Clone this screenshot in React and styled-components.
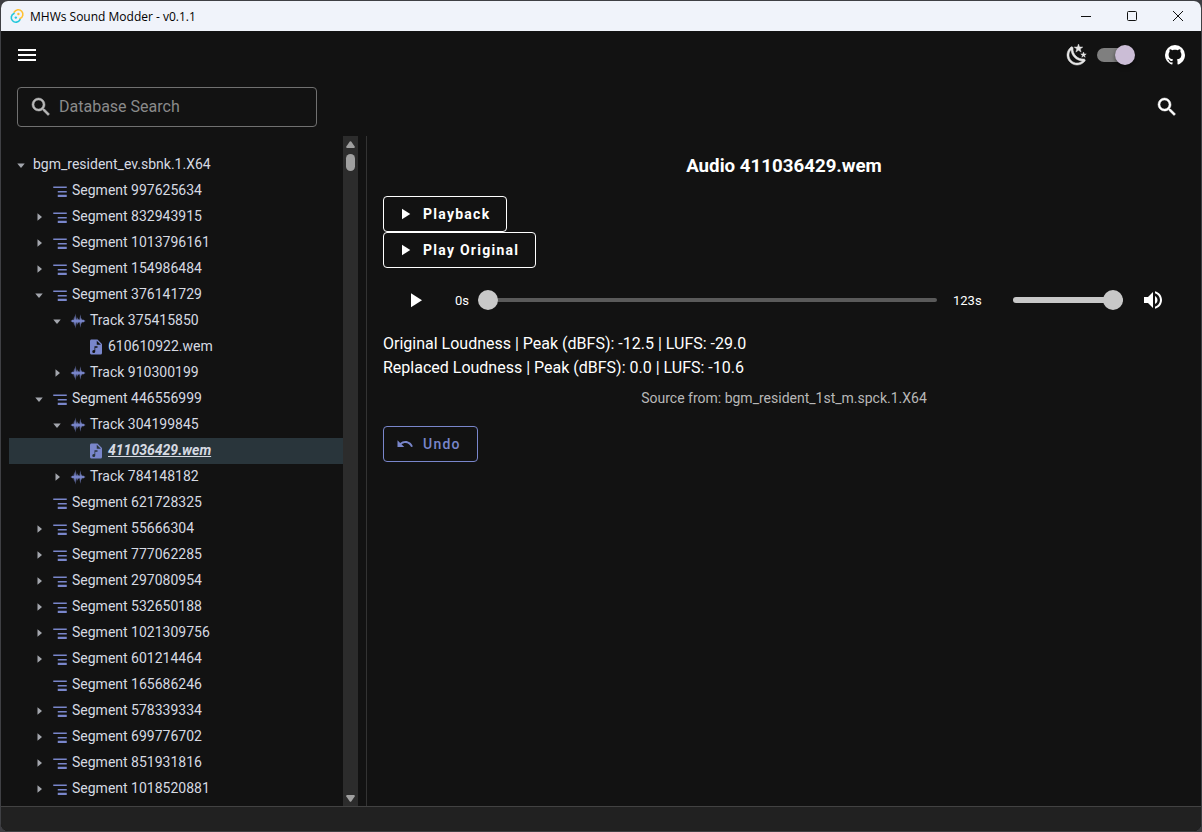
import React, { useState } from "react";
import styled, { createGlobalStyle } from "styled-components";

const GlobalStyle = createGlobalStyle`
  * { box-sizing: border-box; }
  body { margin: 0; background: #3d3d42; font-family: Roboto, "Liberation Sans", sans-serif; }
  button, input { font: inherit; color: inherit; }
`;

const paths = {
  menu: "M3,6H21V8H3V6M3,11H21V13H3V11M3,16H21V18H3V16Z",
  magnify:
    "M9.5,3A6.5,6.5 0 0,1 16,9.5C16,11.11 15.41,12.59 14.44,13.73L14.71,14H15.5L20.5,19L19,20.5L14,15.5V14.71L13.73,14.44C12.59,15.41 11.11,16 9.5,16A6.5,6.5 0 0,1 3,9.5A6.5,6.5 0 0,1 9.5,3M9.5,5C7,5 5,7 5,9.5C5,12 7,14 9.5,14C12,14 14,12 14,9.5C14,7 12,5 9.5,5Z",
  play: "M8,5.14V19.14L19,12.14L8,5.14Z",
  undo: "M12.5,8C9.85,8 7.45,9 5.6,10.6L2,7V16H11L7.38,12.38C8.77,11.22 10.54,10.5 12.5,10.5C16.04,10.5 19.05,12.81 20.1,16L22.47,15.22C21.08,11.03 17.15,8 12.5,8Z",
  volume:
    "M14,3.23V5.29C16.89,6.15 19,8.83 19,12C19,15.17 16.89,17.84 14,18.7V20.77C18,19.86 21,16.28 21,12C21,7.72 18,4.14 14,3.23M16.5,12C16.5,10.23 15.5,8.71 14,7.97V16C15.5,15.29 16.5,13.76 16.5,12M3,9V15H7L12,20V4L7,9H3Z",
  github:
    "M12,2A10,10 0 0,0 2,12C2,16.42 4.87,20.17 8.84,21.5C9.34,21.58 9.5,21.27 9.5,21C9.5,20.77 9.5,20.14 9.5,19.31C6.73,19.91 6.14,17.97 6.14,17.97C5.68,16.81 5.03,16.5 5.03,16.5C4.12,15.88 5.1,15.9 5.1,15.9C6.1,15.97 6.63,16.93 6.63,16.93C7.5,18.45 8.97,18 9.54,17.76C9.63,17.11 9.89,16.67 10.17,16.42C7.95,16.17 5.62,15.31 5.62,11.5C5.62,10.39 6,9.5 6.65,8.79C6.55,8.54 6.2,7.5 6.75,6.15C6.75,6.15 7.59,5.88 9.5,7.17C10.29,6.95 11.15,6.84 12,6.84C12.85,6.84 13.71,6.95 14.5,7.17C16.41,5.88 17.25,6.15 17.25,6.15C17.8,7.5 17.45,8.54 17.35,8.79C18,9.5 18.38,10.39 18.38,11.5C18.38,15.32 16.04,16.16 13.81,16.41C14.17,16.72 14.5,17.33 14.5,18.26C14.5,19.6 14.5,20.68 14.5,21C14.5,21.27 14.66,21.59 15.17,21.5C19.14,20.16 22,16.42 22,12A10,10 0 0,0 12,2Z",
  night:
    "M17.75,4.09L15.22,6.03L16.13,9.09L13.5,7.28L10.87,9.09L11.78,6.03L9.25,4.09L12.44,4L13.5,1L14.56,4L17.75,4.09M21.25,11L19.61,12.25L20.2,14.23L18.5,13.06L16.8,14.23L17.39,12.25L15.75,11L17.81,10.95L18.5,9L19.19,10.95L21.25,11M18.97,15.95C19.8,15.87 20.69,17.05 20.16,17.8C19.84,18.25 19.5,18.67 19.08,19.07C15.17,23 8.84,23 4.94,19.07C1.03,15.17 1.03,8.83 4.94,4.93C5.34,4.53 5.76,4.17 6.21,3.85C6.96,3.32 8.14,4.21 8.06,5.04C7.79,7.9 8.75,10.87 10.95,13.06C13.14,15.26 16.1,16.22 18.97,15.95M17.33,17.97C14.5,17.81 11.7,16.64 9.53,14.5C7.36,12.31 6.2,9.5 6.04,6.68C3.23,9.82 3.34,14.64 6.35,17.66C9.37,20.67 14.19,20.78 17.33,17.97Z",
  segment: "M3,6H21V8H3V6M9,12H21V14H9V12M9,17H21V20H9V17Z",
  track:
    "M22 12L20 13L19 14L18 13L17 16L16 13L15 21L14 13L13 15L12 13L11 17L10 13L9 22L8 13L7 19L6 13L5 14L4 13L2 12L4 11L5 10L6 11L7 5L8 11L9 2L10 11L11 7L12 11L13 9L14 11L15 3L16 11L17 8L18 11L19 10L20 11L22 12Z",
  file: "M13,9H18.5L13,3.5V9M6,2H14L20,8V20A2,2 0 0,1 18,22H6C4.89,22 4,21.1 4,20V4C4,2.89 4.89,2 6,2M9,16A2,2 0 0,0 7,18A2,2 0 0,0 9,20A2,2 0 0,0 11,18V13H14V11H10V16.27C9.71,16.1 9.36,16 9,16Z",
};

const Svg = styled.svg`
  width: ${(p) => p.$size}px;
  height: ${(p) => p.$size}px;
  flex: none;
  display: block;
  fill: currentColor;
`;

const Icon = ({ name, size = 24 }) => (
  <Svg $size={size} viewBox="0 0 24 24" aria-hidden="true">
    <path
      d={paths[name]}
      stroke={name === "magnify" || name === "night" ? "currentColor" : "none"}
      strokeWidth="0.5"
    />
  </Svg>
);

const Window = styled.div`
  height: 100vh;
  display: flex;
  flex-direction: column;
  overflow: hidden;
  border: 1px solid #3f4044;
  border-radius: 8px;
  background: #121212;
  color: #fff;
`;

const TitleBar = styled.header`
  display: flex;
  align-items: center;
  flex: none;
  height: 30px;
  padding-left: 8px;
  background: #f0f3fa;
  color: #000;
`;

const WindowTitle = styled.span`
  flex: 1;
  padding-left: 5px;
  font: 12px "Open Sans", "Noto Sans", sans-serif;
`;

const CaptionButton = styled.button`
  display: grid;
  place-items: center;
  width: 46px;
  height: 30px;
  padding: 0;
  border: 0;
  background: transparent;
`;

const LineSvg = styled.svg`
  width: 12px;
  height: 12px;
  fill: none;
  stroke: #111;
`;

const LogoSvg = styled.svg`
  width: 16px;
  height: 16px;
`;

const AppBar = styled.div`
  display: flex;
  align-items: center;
  flex: none;
  height: 48px;
  padding: 0 14px;
`;

const IconButton = styled.button`
  display: grid;
  place-items: center;
  padding: 0;
  border: 0;
  background: transparent;
  color: #fff;
  cursor: pointer;
`;

const IconLink = styled.a`
  color: #fff;
`;

const ThemeLabel = styled.label`
  display: flex;
  align-items: center;
  gap: 8px;
  margin: 0 28px 0 auto;
  color: #e6e6e6;
`;

const Switch = styled.input`
  appearance: none;
  position: relative;
  width: 38px;
  height: 20px;
  margin: 0;
  &::before {
    content: "";
    position: absolute;
    inset: 3px 2px 3px 0;
    border-radius: 7px;
    background: #7f7f7f;
  }
  &::after {
    content: "";
    position: absolute;
    top: 0;
    left: ${(p) => (p.checked ? "18px" : "-2px")};
    width: 20px;
    height: 20px;
    border-radius: 50%;
    background: #cbbdd6;
    box-shadow: 0 2px 4px rgba(0, 0, 0, 0.5);
  }
`;

const SearchBar = styled.div`
  display: flex;
  align-items: center;
  justify-content: space-between;
  flex: none;
  padding: 8px 22px 9px 16px;
`;

const SearchField = styled.label`
  display: flex;
  align-items: center;
  gap: 6px;
  width: 300px;
  height: 40px;
  padding: 0 11px;
  border: 1px solid #707070;
  border-radius: 4px;
  color: #b8b8b8;
`;

const SearchInput = styled.input`
  flex: 1;
  min-width: 0;
  padding: 0;
  border: 0;
  outline: 0;
  background: transparent;
  font-size: 16px;
  line-height: 24px;
  &::placeholder {
    color: #8a8a8a;
    opacity: 1;
  }
`;

const Body = styled.div`
  display: flex;
  flex: 1;
  min-height: 0;
`;

const Sidebar = styled.nav`
  display: flex;
  width: 366px;
  flex: none;
  padding: 0 8px;
  border-right: 1px solid #333;
`;

const Tree = styled.ul`
  flex: 1;
  margin: 0;
  padding: 16px 0 0;
  overflow: hidden;
  list-style: none;
`;

const TreeRow = styled.button`
  display: flex;
  align-items: center;
  width: 100%;
  height: 26px;
  padding: 0 0 2px ${(p) => p.$depth * 18}px;
  border: 0;
  background: ${(p) => (p.$selected ? "#29353b" : "transparent")};
  color: #d6dae2;
  font-size: 14px;
  text-align: left;
  cursor: pointer;
`;

const TreeLabel = styled.span`
  font-weight: ${(p) => (p.$selected ? 700 : 400)};
  font-style: ${(p) => (p.$selected ? "italic" : "normal")};
  text-decoration: ${(p) => (p.$selected ? "underline" : "none")};
`;

const CaretSlot = styled.span`
  display: grid;
  place-items: center;
  flex: none;
  width: 24px;
  padding-top: 2px;
  color: #a3a6ad;
`;

const CaretSvg = styled.svg`
  width: 12px;
  height: 12px;
  fill: currentColor;
  transform: rotate(${(p) => (p.$open ? 90 : 0)}deg);
`;

const NodeIcon = styled.span`
  padding-top: 2px;
  margin-right: 3px;
  color: #7986cb;
`;

const ScrollTrack = styled.div`
  display: flex;
  flex-direction: column;
  align-items: center;
  width: 15px;
  padding: 5px 0 4px;
  background: #2c2c2c;
`;

const ScrollThumb = styled.div`
  width: 9px;
  height: 17px;
  margin: 6px 0 auto;
  border-radius: 5px;
  background: #9f9f9f;
`;

const ScrollArrow = styled.svg`
  width: 9px;
  height: 7px;
  fill: #9f9f9f;
`;

const Content = styled.main`
  flex: 1;
  min-width: 0;
  padding: 16px;
`;

const Heading = styled.h3`
  margin: 0 0 16px;
  line-height: 28px;
  text-align: center;
`;

const ButtonColumn = styled.div`
  display: flex;
  flex-direction: column;
  align-items: flex-start;
`;

const OutlinedButton = styled.button`
  display: inline-flex;
  align-items: center;
  gap: 9px;
  height: 36px;
  padding: 0 16px 0 12px;
  border: 1px solid currentColor;
  border-radius: 4px;
  background: transparent;
  color: ${(p) => (p.$tone === "primary" ? "#7986cb" : "#fff")};
  font-size: 14px;
  font-weight: ${(p) => (p.$tone === "primary" ? 500 : 700)};
  letter-spacing: 0.09em;
  cursor: pointer;
`;

const Player = styled.div`
  display: flex;
  align-items: center;
  height: 40px;
  margin: 12px 0;
  padding: 0 20px;
`;

const Time = styled.span`
  flex: none;
  font-size: 13px;
`;

const Elapsed = styled(Time)`
  width: 23px;
`;

const Duration = styled(Time)`
  width: 76px;
  padding-left: 16px;
`;

const Slider = styled.input`
  appearance: none;
  height: 20px;
  margin: 0;
  min-width: 0;
  background: transparent;
  &::-webkit-slider-runnable-track {
    height: ${(p) => p.$track}px;
    border-radius: 3px;
    background: ${(p) => p.$color};
  }
  &::-webkit-slider-thumb {
    appearance: none;
    width: 20px;
    height: 20px;
    margin-top: ${(p) => p.$track / 2 - 10}px;
    border: 0;
    border-radius: 50%;
    background: #c8c8c8;
  }
`;

const SeekSlider = styled(Slider)`
  flex: 1;
`;

const VolumeSlider = styled(Slider)`
  width: 110px;
  margin-right: 18px;
`;

const PlayButton = styled(IconButton)`
  margin-right: 28px;
`;

const Loudness = styled.p`
  margin: 0;
  font-size: 16px;
  line-height: 24px;
`;

const Source = styled.p`
  margin: 8px 0 18px;
  color: #b8b8b8;
  font-size: 14px;
  line-height: 20px;
  text-align: center;
`;

const StatusBar = styled.footer`
  flex: none;
  height: 25px;
  border-top: 1px solid #424242;
  background: #212121;
`;

const nodes = [
  { depth: 0, open: true, label: "bgm_resident_ev.sbnk.1.X64" },
  { depth: 1, kind: "segment", label: "Segment 997625634" },
  { depth: 1, kind: "segment", open: false, label: "Segment 832943915" },
  { depth: 1, kind: "segment", open: false, label: "Segment 1013796161" },
  { depth: 1, kind: "segment", open: false, label: "Segment 154986484" },
  { depth: 1, kind: "segment", open: true, label: "Segment 376141729" },
  { depth: 2, kind: "track", open: true, label: "Track 375415850" },
  { depth: 3, kind: "file", label: "610610922.wem" },
  { depth: 2, kind: "track", open: false, label: "Track 910300199" },
  { depth: 1, kind: "segment", open: true, label: "Segment 446556999" },
  { depth: 2, kind: "track", open: true, label: "Track 304199845" },
  { depth: 3, kind: "file", label: "411036429.wem" },
  { depth: 2, kind: "track", open: false, label: "Track 784148182" },
  { depth: 1, kind: "segment", label: "Segment 621728325" },
  { depth: 1, kind: "segment", open: false, label: "Segment 55666304" },
  { depth: 1, kind: "segment", open: false, label: "Segment 777062285" },
  { depth: 1, kind: "segment", open: false, label: "Segment 297080954" },
  { depth: 1, kind: "segment", open: false, label: "Segment 532650188" },
  { depth: 1, kind: "segment", open: false, label: "Segment 1021309756" },
  { depth: 1, kind: "segment", open: false, label: "Segment 601214464" },
  { depth: 1, kind: "segment", label: "Segment 165686246" },
  { depth: 1, kind: "segment", open: false, label: "Segment 578339334" },
  { depth: 1, kind: "segment", open: false, label: "Segment 699776702" },
  { depth: 1, kind: "segment", open: false, label: "Segment 851931816" },
  { depth: 1, kind: "segment", open: false, label: "Segment 1018520881" },
];

function TreeNode({ node, selected, onSelect }) {
  return (
    <li>
      <TreeRow
        type="button"
        $depth={node.depth}
        $selected={selected}
        aria-expanded={node.open}
        onClick={() => onSelect(node.label)}
      >
        <CaretSlot>
          {node.open !== undefined && (
            <CaretSvg $open={node.open} viewBox="0 0 1024 1024" aria-hidden="true">
              <path d="M384 192v640l384-320z" />
            </CaretSvg>
          )}
        </CaretSlot>
        {node.kind && (
          <NodeIcon>
            <Icon name={node.kind} size={18} />
          </NodeIcon>
        )}
        <TreeLabel $selected={selected}>{node.label}</TreeLabel>
      </TreeRow>
    </li>
  );
}

export default function App() {
  const [selected, setSelected] = useState("411036429.wem");
  const [dark, setDark] = useState(true);

  return (
    <>
      <GlobalStyle />
      <Window>
        <TitleBar>
          <LogoSvg viewBox="0 0 16 16" fill="none" aria-hidden="true">
            <path
              d="M5.2 4.2A4.6 4.6 0 1 1 11 10.6"
              stroke="#ffc131"
              strokeWidth="1.6"
              strokeLinecap="round"
            />
            <path
              d="M11 11.6A4.6 4.6 0 1 1 5 5.4"
              stroke="#24c8db"
              strokeWidth="1.6"
              strokeLinecap="round"
            />
            <circle cx="9.4" cy="6" r="1.2" fill="#ffc131" />
            <circle cx="6.8" cy="9.6" r="1.2" fill="#24c8db" />
          </LogoSvg>
          <WindowTitle>MHWs Sound Modder - v0.1.1</WindowTitle>
          <CaptionButton type="button" aria-label="Minimize">
            <LineSvg viewBox="0 0 12 12">
              <path d="M1 6.5H11" />
            </LineSvg>
          </CaptionButton>
          <CaptionButton type="button" aria-label="Maximize">
            <LineSvg viewBox="0 0 12 12">
              <rect x="1.5" y="1.5" width="9" height="9" rx="1" />
            </LineSvg>
          </CaptionButton>
          <CaptionButton type="button" aria-label="Close">
            <LineSvg viewBox="0 0 12 12">
              <path d="M1 1L11 11M11 1L1 11" />
            </LineSvg>
          </CaptionButton>
        </TitleBar>

        <AppBar>
          <IconButton type="button" aria-label="Menu">
            <Icon name="menu" />
          </IconButton>
          <ThemeLabel>
            <Icon name="night" />
            <Switch
              type="checkbox"
              aria-label="Dark theme"
              checked={dark}
              onChange={(e) => setDark(e.target.checked)}
            />
          </ThemeLabel>
          <IconLink href="#github" aria-label="GitHub">
            <Icon name="github" />
          </IconLink>
        </AppBar>

        <SearchBar>
          <SearchField>
            <Icon name="magnify" />
            <SearchInput type="text" aria-label="Database Search" placeholder="Database Search" />
          </SearchField>
          <IconButton type="button" aria-label="Search">
            <Icon name="magnify" />
          </IconButton>
        </SearchBar>

        <Body>
          <Sidebar>
            <Tree>
              {nodes.map((node) => (
                <TreeNode
                  key={node.label}
                  node={node}
                  selected={node.label === selected}
                  onSelect={setSelected}
                />
              ))}
            </Tree>
            <ScrollTrack aria-hidden="true">
              <ScrollArrow viewBox="0 0 9 7">
                <path d="M3.8 0.5Q4.5 -0.2 5.2 0.5L8.7 5.5Q9.2 7 7.8 7H1.2Q-0.2 7 0.3 5.5Z" />
              </ScrollArrow>
              <ScrollThumb />
              <ScrollArrow viewBox="0 0 9 7">
                <path d="M3.8 6.5Q4.5 7.2 5.2 6.5L8.7 1.5Q9.2 0 7.8 0H1.2Q-0.2 0 0.3 1.5Z" />
              </ScrollArrow>
            </ScrollTrack>
          </Sidebar>

          <Content>
            <Heading>Audio 411036429.wem</Heading>
            <ButtonColumn>
              <OutlinedButton type="button">
                <Icon name="play" size={18} />
                Playback
              </OutlinedButton>
              <OutlinedButton type="button">
                <Icon name="play" size={18} />
                Play Original
              </OutlinedButton>
            </ButtonColumn>
            <Player>
              <PlayButton type="button" aria-label="Play">
                <Icon name="play" />
              </PlayButton>
              <Elapsed>0s</Elapsed>
              <SeekSlider
                type="range"
                aria-label="Position"
                min="0"
                max="123"
                defaultValue="0"
                $track={4}
                $color="#5a5a5a"
              />
              <Duration>123s</Duration>
              <VolumeSlider
                type="range"
                aria-label="Volume"
                min="0"
                max="100"
                defaultValue="100"
                $track={6}
                $color="#c8c8c8"
              />
              <IconButton type="button" aria-label="Mute">
                <Icon name="volume" />
              </IconButton>
            </Player>
            <Loudness>Original Loudness | Peak (dBFS): -12.5 | LUFS: -29.0</Loudness>
            <Loudness>Replaced Loudness | Peak (dBFS): 0.0 | LUFS: -10.6</Loudness>
            <Source>Source from: bgm_resident_1st_m.spck.1.X64</Source>
            <OutlinedButton type="button" $tone="primary">
              <Icon name="undo" size={18} />
              Undo
            </OutlinedButton>
          </Content>
        </Body>
        <StatusBar />
      </Window>
    </>
  );
}
